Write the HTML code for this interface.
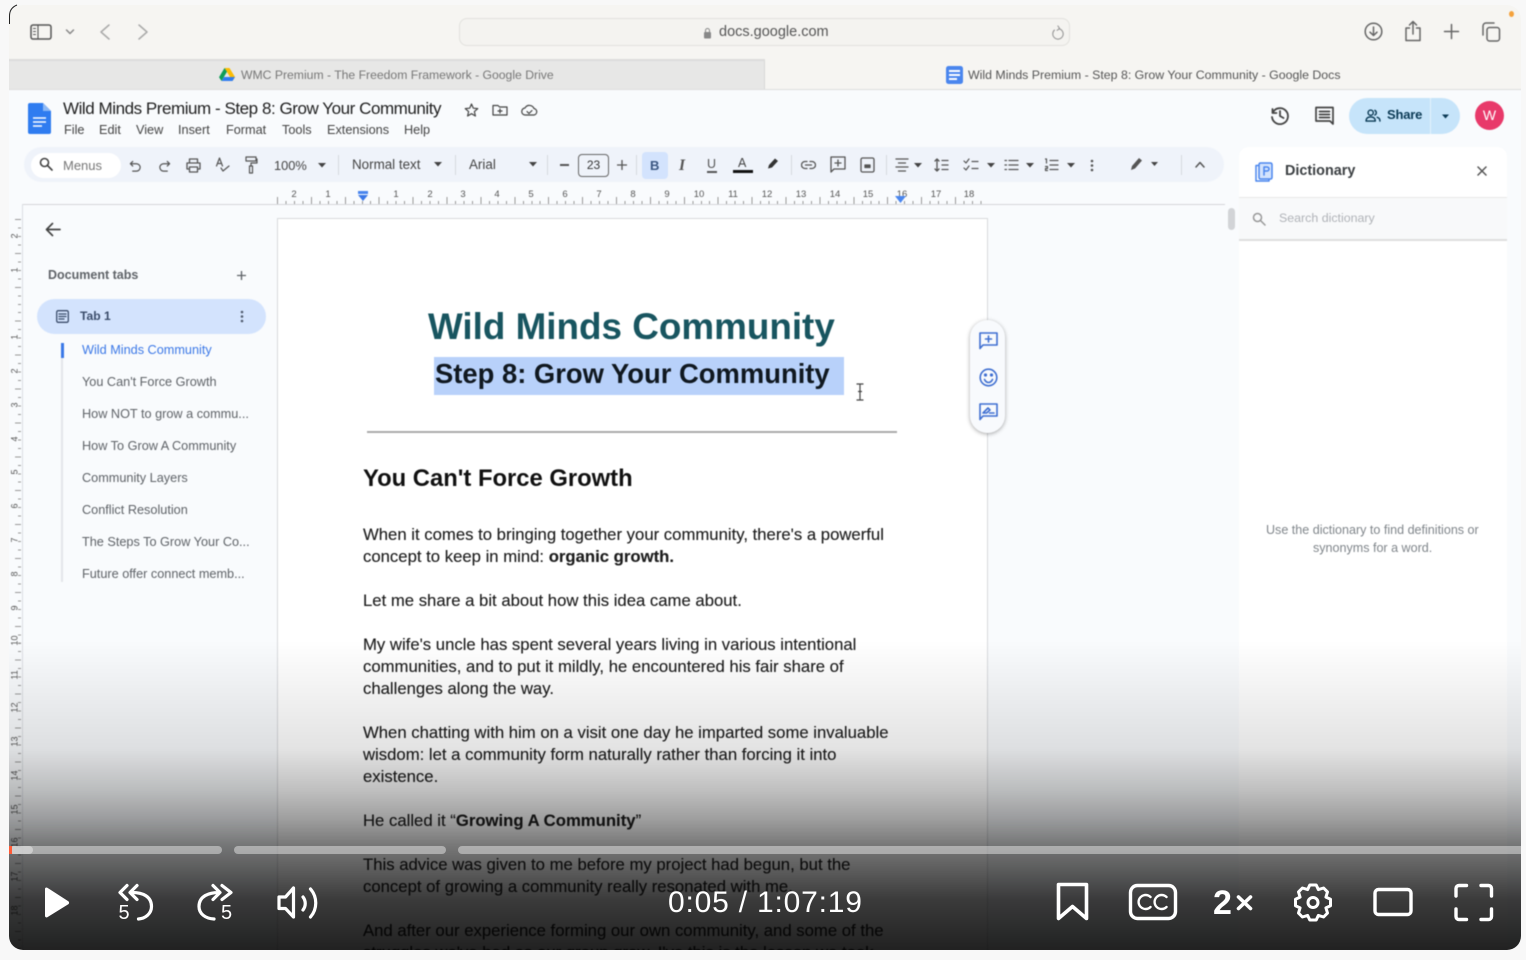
<!DOCTYPE html>
<html><head><meta charset="utf-8"><style>
html,body{margin:0;padding:0;width:1526px;height:960px;overflow:hidden;background:#f8f8f8;font-family:"Liberation Sans",sans-serif}
#f{position:absolute;left:9px;top:5px;width:1512px;height:945px;border-radius:14px;overflow:hidden;background:#f9fbfd}
#c{position:absolute;left:-9px;top:-5px;width:1526px;height:960px;filter:blur(.45px)}
#c div,#c span,#c svg{position:absolute}
.t{white-space:nowrap;line-height:1}
.g{left:363px;font-size:16.72px;color:#1c1c1c;white-space:nowrap;line-height:22px;-webkit-text-stroke:.12px #1c1c1c}
.m{top:123px;font-size:12.7px;color:#444;white-space:nowrap}
.h{top:189px;font-size:9.5px;color:#555;white-space:nowrap;transform:translateX(-50%)}
.v{left:10px;font-size:9px;color:#555;transform:rotate(-90deg);width:9px;text-align:center}
.o{left:82px;font-size:12.7px;color:#5f6368;white-space:nowrap}
svg.i{fill:none;stroke:#555;stroke-width:1.5;stroke-linecap:round;stroke-linejoin:round}
</style></head><body>
<div id="f"><div id="c">
<!-- browser bar -->
<div style="left:0;top:0;width:1526px;height:60px;background:#f6f5f2"></div>
<div style="left:459px;top:18px;width:611px;height:28px;border:1px solid #e2e1dd;border-radius:8px;background:#f4f3f0;box-sizing:border-box"></div>
<svg class="i" style="left:30px;top:24px" width="22" height="16" viewBox="0 0 22 16"><rect x="1" y="1" width="20" height="14" rx="2"/><path d="M8 1v14M3.500 4.500h2M3.500 7.500h2M3.500 10.500h2" stroke-width="1.100"/></svg>
<svg class="i" style="left:65px;top:28px;stroke:#888" width="10" height="8" viewBox="0 0 10 8"><path d="M1.500 2l3.500 3.500L8.500 2"/></svg>
<svg class="i" style="left:99px;top:24px;stroke:#aaa" width="12" height="16" viewBox="0 0 12 16"><path d="M10 1L2 8l8 7"/></svg>
<svg class="i" style="left:137px;top:24px;stroke:#aaa" width="12" height="16" viewBox="0 0 12 16"><path d="M2 1l8 7-8 7"/></svg>
<svg style="left:703px;top:27px" width="9" height="12" viewBox="0 0 9 12"><rect x="1" y="5" width="7" height="6.500" rx="1" fill="#888"/><path d="M2.500 5V3.500a2 2 0 014 0V5" fill="none" stroke="#888"/></svg>
<span class="t" style="left:719px;top:25px;font-size:14.500px;color:#555">docs.google.com</span>
<svg class="i" style="left:1051px;top:25px;stroke:#999;stroke-width:1.300" width="13" height="15" viewBox="0 0 15 17"><path d="M9 4.200a6 6 0 11-5 1.500M8 1l2 3-3 2"/></svg>
<svg class="i" style="left:1364px;top:22px;stroke:#666" width="19" height="19" viewBox="0 0 19 19"><circle cx="9.500" cy="9.500" r="8.300"/><path d="M9.500 5v8.500M6 10.200l3.500 3.300 3.500-3.300"/></svg>
<svg class="i" style="left:1404px;top:20px;stroke:#666" width="18" height="22" viewBox="0 0 18 22"><path d="M5.500 8H2v12.500h14V8h-3.500M9 14V1.500M5.500 5L9 1.500 12.500 5"/></svg>
<svg class="i" style="left:1443px;top:23px;stroke:#666" width="17" height="17" viewBox="0 0 17 17"><path d="M8.500 1.500v14M1.500 8.500h14"/></svg>
<svg class="i" style="left:1481px;top:22px;stroke:#666" width="20" height="20" viewBox="0 0 20 20"><rect x="6" y="5.500" width="12.500" height="13.500" rx="2.500"/><path d="M2 13V4a3 3 0 013-3h8"/></svg>
<div style="left:1509px;top:11px;width:5px;height:6px;border-radius:50%;background:#f5a23c"></div>
<!-- tabs -->
<div style="left:0;top:60px;width:765px;height:30px;background:#e7e7e6;border-right:1px solid #d8d8d8;box-sizing:border-box"></div>
<div style="left:765px;top:60px;width:761px;height:30px;background:#f6f5f2"></div>
<div style="left:0;top:59px;width:765px;height:2px;background:#dcdcdb"></div>
<div style="left:0;top:89px;width:1526px;height:1px;background:#dedede"></div>
<svg style="left:219px;top:67px" width="16" height="15" viewBox="0 0 16 15"><path d="M5.500 1h5L16 10l-2.500 4z" fill="#fbbc04"/><path d="M5.500 1L0 10.300l2.500 3.700L8 4.800z" fill="#0f9d58"/><path d="M2.500 14h11L16 10H5z" fill="#2f7cf0"/></svg>
<span class="t" style="left:241px;top:69px;font-size:12.200px;color:#777">WMC Premium - The Freedom Framework - Google Drive</span>
<svg style="left:946px;top:66px" width="17" height="18" viewBox="0 0 17 18"><rect width="17" height="18" rx="2.500" fill="#4a86ee"/><path d="M3 5h11M3 9h11M3 13h8" stroke="#fff" stroke-width="2"/></svg>
<span class="t" style="left:968px;top:69px;font-size:12.350px;color:#555">Wild Minds Premium - Step 8: Grow Your Community - Google Docs</span>
<!-- docs header -->
<svg style="left:28px;top:103px" width="23" height="31" viewBox="0 0 23 31"><path d="M2 0h13l8 8v21a2 2 0 01-2 2H2a2 2 0 01-2-2V2a2 2 0 012-2z" fill="#2f7cf0"/><path d="M15 0l8 8h-8z" fill="#8cb8f5"/><path d="M5 15h13M5 19h13M5 23h9" stroke="#fff" stroke-width="1.500"/></svg>
<span class="t" style="left:63px;top:100px;font-size:17px;color:#1f1f1f;letter-spacing:-.45px">Wild Minds Premium - Step 8: Grow Your Community</span>
<span class="m" style="left:64px">File</span><span class="m" style="left:99px">Edit</span><span class="m" style="left:136px">View</span><span class="m" style="left:178px">Insert</span><span class="m" style="left:226px">Format</span><span class="m" style="left:282px">Tools</span><span class="m" style="left:327px">Extensions</span><span class="m" style="left:404px">Help</span>
<svg class="i" style="left:464px;top:103px;stroke-width:1.200;stroke:#444" width="15" height="14" viewBox="0 0 15 14"><path d="M7.500 1l1.800 4.200 4.500.4-3.400 3 1 4.400-3.900-2.300L3.600 13l1-4.400-3.400-3 4.500-.4z"/></svg>
<svg class="i" style="left:492px;top:104px;stroke-width:1.200;stroke:#444" width="16" height="12" viewBox="0 0 16 12"><path d="M1 1.500h5l1.500 1.500H15v8H1zM8 5v4M6 7h4"/></svg>
<svg class="i" style="left:521px;top:104px;stroke-width:1.200;stroke:#444" width="17" height="12" viewBox="0 0 17 12"><path d="M4.500 11a3.500 3.500 0 01-.5-7A5 5 0 0113 4.500a3.300 3.300 0 010 6.500zM6 7.500l2 2 3-3"/></svg>
<svg class="i" style="left:1270px;top:106px;stroke:#444;stroke-width:1.800" width="19" height="19" viewBox="0 0 19 19"><path d="M2.500 3v4h4M2.600 7a8 8 0 11-.6 4M10 5v5l3.500 2"/></svg>
<svg class="i" style="left:1315px;top:106px;stroke:#444;stroke-width:1.700" width="19" height="19" viewBox="0 0 19 19"><path d="M1 1.500h17V18l-3-3H1zM4.500 5.500h10M4.500 8.500h10M4.500 11.500h10"/></svg>
<div style="left:1349px;top:98px;width:111px;height:36px;border-radius:18px;background:#c6e4fa"></div>
<div style="left:1430px;top:98px;width:1px;height:36px;background:#e4f2fc"></div>
<svg class="i" style="left:1365px;top:109px;stroke:#0b3a55;stroke-width:1.500" width="16" height="13" viewBox="0 0 17 14"><circle cx="6" cy="4" r="2.800"/><path d="M1 13c0-3 2-4.500 5-4.500s5 1.500 5 4.500zM10.500 1.500a2.800 2.800 0 010 5M13 9c2 .5 3 2 3 4"/></svg>
<span class="t" style="left:1387px;top:108px;font-size:13px;font-weight:bold;color:#0b3a55;letter-spacing:-.2px">Share</span>
<svg style="left:1442px;top:114px" width="7" height="5"><path d="M0 .5h7L3.500 4.500z" fill="#0b3a55"/></svg>
<div style="left:1475px;top:101px;width:29px;height:29px;border-radius:50%;background:#e8396a;color:#fff;font-size:14px;line-height:29px;text-align:center">W</div>
<!-- toolbar -->
<div style="left:24px;top:147px;width:1200px;height:35px;border-radius:18px;background:#eff3fa"></div>
<div style="left:31px;top:153px;width:90px;height:25px;border-radius:13px;background:#fff"></div>
<svg class="i" style="left:39px;top:157px;stroke:#444;stroke-width:1.600" width="14" height="14" viewBox="0 0 14 14"><circle cx="5.500" cy="5.500" r="4"/><path d="M8.500 8.500l4.500 4.500"/></svg>
<span class="t" style="left:63px;top:159px;font-size:13px;color:#777">Menus</span>
<svg class="i" style="left:129px;top:160px;stroke-width:1.300" width="13" height="13" viewBox="0 0 14 14"><path d="M4 1.500L1.500 4 4 6.500M1.500 4H8a4 4 0 010 8H4"/></svg>
<svg class="i" style="left:158px;top:160px;stroke-width:1.300" width="13" height="13" viewBox="0 0 14 14"><path d="M10 1.500L12.500 4 10 6.500M12.500 4H6a4 4 0 000 8h4"/></svg>
<svg class="i" style="left:186px;top:158px;stroke-width:1.300" width="15" height="15" viewBox="0 0 15 15"><path d="M3.500 5V1h8v4M3.500 11H1V5h13v6h-2.500M3.500 9h8v5h-8z"/></svg>
<svg class="i" style="left:215px;top:157px;stroke-width:1.200" width="15" height="16" viewBox="0 0 15 16"><path d="M1.500 9L4.500 1l3 8M2.500 6.500h4M6 11l2 3 6-5"/></svg>
<svg class="i" style="left:244px;top:156px;stroke-width:1.200" width="14" height="18" viewBox="0 0 14 18"><path d="M2 1h10v4H2zM12 3h1v4H7v3M5.500 10h3v7h-3z"/></svg>
<span class="t" style="left:274px;top:160px;font-size:12.800px;color:#444">100%</span>
<svg style="left:318px;top:163px" width="8" height="5"><path d="M0 0h8L4 4.500z" fill="#444"/></svg>
<div style="left:338px;top:155px;width:1px;height:20px;background:#d6d9de"></div>
<span class="t" style="left:352px;top:158px;font-size:13.400px;color:#444">Normal text</span>
<svg style="left:434px;top:162px" width="8" height="5"><path d="M0 0h8L4 4.500z" fill="#444"/></svg>
<div style="left:455px;top:155px;width:1px;height:20px;background:#d6d9de"></div>
<span class="t" style="left:469px;top:158px;font-size:13.400px;color:#444">Arial</span>
<svg style="left:529px;top:162px" width="8" height="5"><path d="M0 0h8L4 4.500z" fill="#444"/></svg>
<div style="left:547px;top:155px;width:1px;height:20px;background:#d6d9de"></div>
<div style="left:560px;top:164px;width:9px;height:1.500px;background:#555"></div>
<div style="left:578px;top:154px;width:31px;height:23px;border:1px solid #666;border-radius:4px;box-sizing:border-box;font-size:12px;line-height:21px;text-align:center;color:#333">23</div>
<svg class="i" style="left:617px;top:160px;stroke-width:1.300" width="10" height="10" viewBox="0 0 10 10"><path d="M5 0v10M0 5h10"/></svg>
<div style="left:636px;top:155px;width:1px;height:20px;background:#d6d9de"></div>
<div style="left:642px;top:152px;width:26px;height:27px;border-radius:4px;background:#d3e3fd"></div>
<span class="t" style="left:650px;top:159px;font-size:13px;font-weight:bold;color:#3a5680">B</span>
<span class="t" style="left:679px;top:158px;font-size:15.500px;font-weight:bold;font-style:italic;color:#555;font-family:'Liberation Serif',serif">I</span>
<span class="t" style="left:707px;top:158px;font-size:12.500px;color:#555">U</span>
<div style="left:707px;top:171px;width:10px;height:1.500px;background:#555"></div>
<span class="t" style="left:738px;top:157px;font-size:12.500px;color:#444">A</span>
<div style="left:733px;top:170px;width:20px;height:3px;background:#111"></div>
<svg style="left:767px;top:157px" width="13" height="13" viewBox="0 0 13 13"><path d="M1 11.500l1-3.500 6-6.500 3 2.500-6 6.500z" fill="#333"/></svg>
<div style="left:791px;top:155px;width:1px;height:20px;background:#d6d9de"></div>
<svg class="i" style="left:801px;top:160px;stroke-width:1.300" width="15" height="10" viewBox="0 0 15 10"><path d="M6 1.500H4a3.500 3.500 0 000 7h2M9 1.500h2a3.500 3.500 0 010 7H9M4.500 5h6"/></svg>
<svg class="i" style="left:830px;top:156px;stroke-width:1.300" width="16" height="17" viewBox="0 0 16 17"><path d="M1 1h14v12H4l-3 3zM8 4v6M5 7h6"/></svg>
<svg class="i" style="left:860px;top:157px;stroke-width:1.300" width="15" height="16" viewBox="0 0 15 16"><rect x="1" y="1" width="13" height="14" rx="1.500"/><path d="M5 10.500h5V8H5z" fill="#555"/></svg>
<div style="left:886px;top:155px;width:1px;height:20px;background:#d6d9de"></div>
<svg class="i" style="left:895px;top:158px;stroke-width:1.300" width="14" height="14" viewBox="0 0 14 14"><path d="M1 1h12M3.500 5h7M1 9h12M3.500 13h7"/></svg>
<svg style="left:914px;top:163px" width="8" height="5"><path d="M0 0h8L4 4.500z" fill="#444"/></svg>
<svg class="i" style="left:934px;top:158px;stroke-width:1.300" width="15" height="14" viewBox="0 0 15 14"><path d="M3 1v12M1 3l2-2 2 2M1 11l2 2 2-2M8 2.500h6M8 7h6M8 11.500h6"/></svg>
<svg class="i" style="left:963px;top:158px;stroke-width:1.200" width="16" height="14" viewBox="0 0 16 14"><path d="M1 3l2 2 3-4M1 10l2 2 3-4M9 3.500h6M9 10.500h6"/></svg>
<svg style="left:987px;top:163px" width="8" height="5"><path d="M0 0h8L4 4.500z" fill="#444"/></svg>
<svg class="i" style="left:1004px;top:159px;stroke-width:1.300" width="15" height="12" viewBox="0 0 15 12"><path d="M1 1.500h1.500M1 6h1.500M1 10.500h1.500M5 1.500h9M5 6h9M5 10.500h9"/></svg>
<svg style="left:1026px;top:163px" width="8" height="5"><path d="M0 0h8L4 4.500z" fill="#444"/></svg>
<svg class="i" style="left:1044px;top:158px" width="15" height="14" viewBox="0 0 15 14"><path d="M1.500 1h1v4M1.500 8.500h2v2h-2v2h2M6 2.500h8M6 7h8M6 11.500h8" stroke-width="1.200"/></svg>
<svg style="left:1067px;top:163px" width="8" height="5"><path d="M0 0h8L4 4.500z" fill="#444"/></svg>
<svg style="left:1090px;top:159px" width="4" height="13"><circle cx="2" cy="2" r="1.300" fill="#555"/><circle cx="2" cy="6.500" r="1.300" fill="#555"/><circle cx="2" cy="11" r="1.300" fill="#555"/></svg>
<svg style="left:1130px;top:157px" width="13" height="14" viewBox="0 0 13 14"><path d="M1 13l1-4 7-8 3 2.500-7 8z" fill="#555"/></svg>
<svg style="left:1151px;top:162px" width="7" height="5"><path d="M0 0h7L3.500 4z" fill="#444"/></svg>
<div style="left:1181px;top:155px;width:1px;height:20px;background:#d6d9de"></div>
<svg class="i" style="left:1195px;top:161px" width="10" height="7" viewBox="0 0 10 7"><path d="M1 6l4-4.500L9 6"/></svg>
<!-- ruler -->
<div style="left:277px;top:201px;width:712px;height:3px;background:repeating-linear-gradient(90deg,#999 0,#999 1px,transparent 1px,transparent 8.475px)"></div>
<div style="left:277px;top:197px;width:712px;height:7px;background:repeating-linear-gradient(90deg,#999 0,#999 1px,transparent 1px,transparent 33.9px)"></div>
<div style="left:22px;top:204px;width:1203px;height:1px;background:#d4d6da"></div>
<span class="h" style="left:294px">2</span><span class="h" style="left:328px">1</span><span class="h" style="left:396px">1</span><span class="h" style="left:430px">2</span><span class="h" style="left:463px">3</span><span class="h" style="left:497px">4</span><span class="h" style="left:531px">5</span><span class="h" style="left:565px">6</span><span class="h" style="left:599px">7</span><span class="h" style="left:633px">8</span><span class="h" style="left:667px">9</span><span class="h" style="left:699px">10</span><span class="h" style="left:733px">11</span><span class="h" style="left:767px">12</span><span class="h" style="left:801px">13</span><span class="h" style="left:835px">14</span><span class="h" style="left:868px">15</span><span class="h" style="left:902px">16</span><span class="h" style="left:936px">17</span><span class="h" style="left:969px">18</span>
<svg style="left:357px;top:191px" width="12" height="12"><path d="M1 0h10v3H1z" fill="#4a86ee"/><path d="M1 4h10L6 10z" fill="#3b78e7"/></svg>
<svg style="left:895px;top:196px" width="11" height="7"><path d="M0 0h11L5.500 7z" fill="#4a86ee"/></svg>
<!-- vertical ruler -->
<div style="left:18px;top:219px;width:3px;height:731px;background:repeating-linear-gradient(180deg,#999 0,#999 1px,transparent 1px,transparent 8.475px)"></div>
<div style="left:15px;top:219px;width:6px;height:731px;background:repeating-linear-gradient(180deg,#999 0,#999 1px,transparent 1px,transparent 33.9px)"></div>
<div style="left:22px;top:204px;width:1px;height:746px;background:#dcdfe4"></div>
<span class="v" style="top:231px">2</span><span class="v" style="top:265px">1</span><span class="v" style="top:332px">1</span><span class="v" style="top:366px">2</span><span class="v" style="top:400px">3</span><span class="v" style="top:434px">4</span><span class="v" style="top:467px">5</span><span class="v" style="top:501px">6</span><span class="v" style="top:535px">7</span><span class="v" style="top:569px">8</span><span class="v" style="top:603px">9</span><span class="v" style="top:636px">10</span><span class="v" style="top:670px">11</span><span class="v" style="top:703px">12</span><span class="v" style="top:737px">13</span><span class="v" style="top:771px">14</span><span class="v" style="top:805px">15</span><span class="v" style="top:838px">16</span><span class="v" style="top:872px">17</span><span class="v" style="top:906px">18</span>
<!-- sidebar -->
<svg class="i" style="left:45px;top:222px;stroke:#444;stroke-width:1.700" width="16" height="15" viewBox="0 0 16 15"><path d="M15 7.500H1.500M7.500 1.500l-6 6 6 6"/></svg>
<span class="t" style="left:48px;top:269px;font-size:12.500px;font-weight:bold;color:#5f6368">Document tabs</span>
<svg class="i" style="left:237px;top:271px;stroke:#5f6368" width="9" height="9" viewBox="0 0 10 10"><path d="M5 0v10M0 5h10"/></svg>
<div style="left:37px;top:299px;width:229px;height:35px;border-radius:18px;background:#d3e3fd"></div>
<svg class="i" style="left:56px;top:310px;stroke:#3b4d6b;stroke-width:1.300" width="13" height="13" viewBox="0 0 13 13"><rect x=".7" y=".7" width="11.600" height="11.600" rx="1.500"/><path d="M3 4h7M3 6.500h7M3 9h5"/></svg>
<span class="t" style="left:80px;top:310px;font-size:12.100px;font-weight:bold;color:#3b4d6b">Tab 1</span>
<svg style="left:240px;top:310px" width="4" height="13"><circle cx="2" cy="2" r="1.300" fill="#4f5b6e"/><circle cx="2" cy="6.500" r="1.300" fill="#4f5b6e"/><circle cx="2" cy="11" r="1.300" fill="#4f5b6e"/></svg>
<div style="left:61px;top:343px;width:2px;height:239px;background:#e3e6ea"></div>
<div style="left:61px;top:343px;width:3px;height:15px;background:#3b78e7"></div>
<span class="o" style="top:343px;color:#3b78e7">Wild Minds Community</span>
<span class="o" style="top:375px">You Can't Force Growth</span>
<span class="o" style="top:407px">How NOT to grow a commu...</span>
<span class="o" style="top:439px">How To Grow A Community</span>
<span class="o" style="top:471px">Community Layers</span>
<span class="o" style="top:503px">Conflict Resolution</span>
<span class="o" style="top:535px">The Steps To Grow Your Co...</span>
<span class="o" style="top:567px">Future offer connect memb...</span>
<!-- page -->
<div style="left:277px;top:218px;width:711px;height:740px;background:#fff;border:1px solid #d8dadd;box-sizing:border-box"></div>
<span class="t" style="left:428px;top:309px;font-size:36.850px;font-weight:bold;color:#185560">Wild Minds Community</span>
<div style="left:434px;top:357px;width:410px;height:38px;background:#b8d1fa"></div>
<span class="t" style="left:435px;top:360px;font-size:27.400px;font-weight:bold;color:#101820">Step 8: Grow Your Community</span>
<svg class="i" style="left:855px;top:383px;stroke:#444;stroke-width:1.200" width="10" height="18" viewBox="0 0 10 18"><path d="M2 1h6M2 17h6M5 1v16M3.500 8.500h3"/></svg>
<div style="left:367px;top:431px;width:530px;height:1.500px;background:#aaa"></div>
<span class="t" style="left:363px;top:467px;font-size:23.800px;font-weight:bold;color:#111">You Can't Force Growth</span>
<div class="g" style="top:524px">When it comes to bringing together your community, there's a powerful<br>concept to keep in mind: <b>organic growth.</b></div>
<div class="g" style="top:590px">Let me share a bit about how this idea came about.</div>
<div class="g" style="top:634px">My wife's uncle has spent several years living in various intentional<br>communities, and to put it mildly, he encountered his fair share of<br>challenges along the way.</div>
<div class="g" style="top:722px">When chatting with him on a visit one day he imparted some invaluable<br>wisdom: let a community form naturally rather than forcing it into<br>existence.</div>
<div class="g" style="top:810px">He called it “<b>Growing A Community</b>”</div>
<div class="g" style="top:854px">This advice was given to me before my project had begun, but the<br>concept of growing a community really resonated with me.</div>
<div class="g" style="top:920px">And after our experience forming our own community, and some of the<br>struggles we've had as our group grew, I've this is the lesson we took</div>
<!-- floating bar -->
<div style="left:970px;top:320px;width:35px;height:113px;border-radius:18px;background:#f8fafd;box-shadow:0 1px 4px rgba(0,0,0,.35)"></div>
<svg class="i" style="left:979px;top:332px;stroke:#3f6fd1;stroke-width:1.600" width="19" height="18" viewBox="0 0 19 18"><path d="M1 1h17v12H4l-3 3.500zM9.500 4v6M6.500 7h6"/></svg>
<svg class="i" style="left:979px;top:368px;stroke:#3f6fd1;stroke-width:1.600" width="19" height="19" viewBox="0 0 19 19"><circle cx="9.500" cy="9.500" r="8.300"/><path d="M5.500 11.500c1 2 2.500 3 4 3s3-1 4-3" /><circle cx="6.500" cy="7" r=".8" fill="#3f6fd1"/><circle cx="12.500" cy="7" r=".8" fill="#3f6fd1"/></svg>
<svg class="i" style="left:979px;top:403px;stroke:#3f6fd1;stroke-width:1.600" width="19" height="18" viewBox="0 0 19 18"><path d="M1 1h17v12H4l-3 3.500zM4 10l5-5 2 2-3.500 3zM10.500 10H15"/></svg>
<!-- scrollbar -->
<div style="left:1228px;top:208px;width:7px;height:22px;border-radius:4px;background:#d2d4d7"></div>
<!-- dictionary -->
<div style="left:1239px;top:147px;width:268px;height:803px;background:#fff;border-radius:10px 10px 0 0"></div>
<svg class="i" style="left:1254px;top:162px;stroke:#4a86ee;stroke-width:1.500" width="20" height="20" viewBox="0 0 20 20"><path d="M4 3.500H2V19h13v-1"/><rect x="5" y="1" width="13" height="16" rx="1.500" fill="#d3e3fd"/><path d="M10 13V5h3a2 2 0 010 4h-3"/></svg>
<span class="t" style="left:1285px;top:164px;font-size:14.400px;font-weight:bold;color:#3c4043">Dictionary</span>
<svg class="i" style="left:1477px;top:166px;stroke:#555;stroke-width:1.500" width="10" height="10" viewBox="0 0 10 10"><path d="M1 1l8 8M9 1L1 9"/></svg>
<div style="left:1239px;top:197px;width:268px;height:44px;background:#f8f9fa;border-top:1.500px solid #e8e8e8;border-bottom:2px solid #dedede;box-sizing:border-box"></div>
<svg class="i" style="left:1252px;top:212px;stroke:#999;stroke-width:1.500" width="14" height="14" viewBox="0 0 14 14"><circle cx="5.500" cy="5.500" r="4"/><path d="M8.500 8.500l4.500 4.500"/></svg>
<span class="t" style="left:1279px;top:212px;font-size:12.400px;color:#b0b3b8">Search dictionary</span>
<span class="t" style="left:1266px;top:524px;font-size:12.550px;color:#80868b">Use the dictionary to find definitions or</span>
<span class="t" style="left:1313px;top:542px;font-size:12.550px;color:#80868b">synonyms for a word.</span>
<!-- gradient -->
<div style="left:0;top:640px;width:1526px;height:320px;background:linear-gradient(180deg,rgba(0,0,0,0) 0%,rgba(0,0,0,.11) 34%,rgba(0,0,0,.25) 47%,rgba(0,0,0,.38) 56%,rgba(0,0,0,.53) 64%,rgba(0,0,0,.64) 72%,rgba(0,0,0,.77) 81%,rgba(0,0,0,.83) 91%,rgba(0,0,0,.87) 97%)"></div>
</div>
<!-- player (sharp layer) -->
<div style="position:absolute;left:0;top:0;width:1512px;height:945px">
<svg style="position:absolute;left:-9px;top:-5px" width="1526" height="960" viewBox="0 0 1526 960">
<g fill="#fff" fill-opacity=".42"><rect x="9" y="846" width="213" height="8" rx="4"/><rect x="234" y="846" width="212" height="8" rx="4"/><rect x="458" y="846" width="1080" height="8" rx="4"/></g>
<rect x="9" y="846" width="24" height="8" rx="4" fill="#fff" fill-opacity=".4"/>
<rect x="9" y="846" width="3" height="8" fill="#ff5a36"/>
<path d="M45 889v27a1.500 1.500 0 002.300 1.200l21-13a1.800 1.800 0 000-3l-21-13.500a1.500 1.500 0 00-2.300 1.300z" fill="#fff"/>
<g fill="none" stroke="#fff" stroke-width="3.200" stroke-linecap="round" stroke-linejoin="round">
<path d="M127 885.500l-7 7 7 7M137 885.500l-7 7 7 7M132 892.500c11 0 19.500 4 19.500 14 0 7-6 12-13 12.500"/>
<path d="M213 885.500l7 7-7 7M222 885.500l9 7-9 7M219 892.500c-10 0-20 3.500-20 14 0 7 6 12 15 12.500"/>
<path d="M279 897h6.500l8-9v29l-8-8.500H279z"/>
<path d="M303 897c3 4 3 9 0 13M310.500 889c7 8 7 20 0 28"/>
<path d="M1058.500 884.500h28v34l-14-12-14 12z" stroke-width="3.600"/>
<rect x="1130.500" y="885.500" width="45" height="33" rx="7" stroke-width="3.400"/>
<path d="M1150.500 897a7 7 0 100 10M1166.500 897a7 7 0 100 10" stroke-width="2.400"/>
<circle cx="1313" cy="902.500" r="5" stroke-width="3"/>
<path transform="translate(1313 902.500)" stroke-width="3" d="M-3.210-17.500L3.210-17.500L5.360-12.930L10.610-14.500L14.500-10.610L12.930-5.360L17.500-3.210L17.500 3.210L12.930 5.360L14.500 10.610L10.610 14.500L5.360 12.930L3.210 17.500L-3.210 17.500L-5.360 12.930L-10.610 14.500L-14.500 10.610L-12.930 5.360L-17.500 3.210L-17.500-3.210L-12.930-5.360L-14.500-10.610L-10.610-14.500L-5.360-12.930Z"/>
<rect x="1375" y="889.500" width="36" height="25" rx="3.500" stroke-width="3.400"/>
<path d="M1456 896v-7.500a3 3 0 013-3h7.500M1481 885.500h7.500a3 3 0 013 3v7.500M1491.500 909v7.500a3 3 0 01-3 3H1481M1466.500 919.500H1459a3 3 0 01-3-3V909" stroke-width="3.400"/>
<path d="M1238.500 897l12 11.500M1250.500 897l-12 11.500" stroke-width="3.600"/>
</g>
<text x="118.500" y="919" font-family="Liberation Sans,sans-serif" font-size="20" fill="#fff">5</text>
<text x="221" y="919" font-family="Liberation Sans,sans-serif" font-size="20" fill="#fff">5</text>
<text x="668" y="912" font-family="Liberation Sans,sans-serif" font-size="30" letter-spacing=".8" fill="#fff">0:05 / 1:07:19</text>
<text x="1213" y="914" font-family="Liberation Sans,sans-serif" font-size="34" font-weight="bold" fill="#fff">2</text>
</svg>
</div>
</div>
<svg style="position:absolute;left:8px;top:4px" width="14" height="22"><path d="M1.500 20V12C1.500 7 4 3 9 1" fill="none" stroke="#222" stroke-width="1"/></svg>
</body></html>
